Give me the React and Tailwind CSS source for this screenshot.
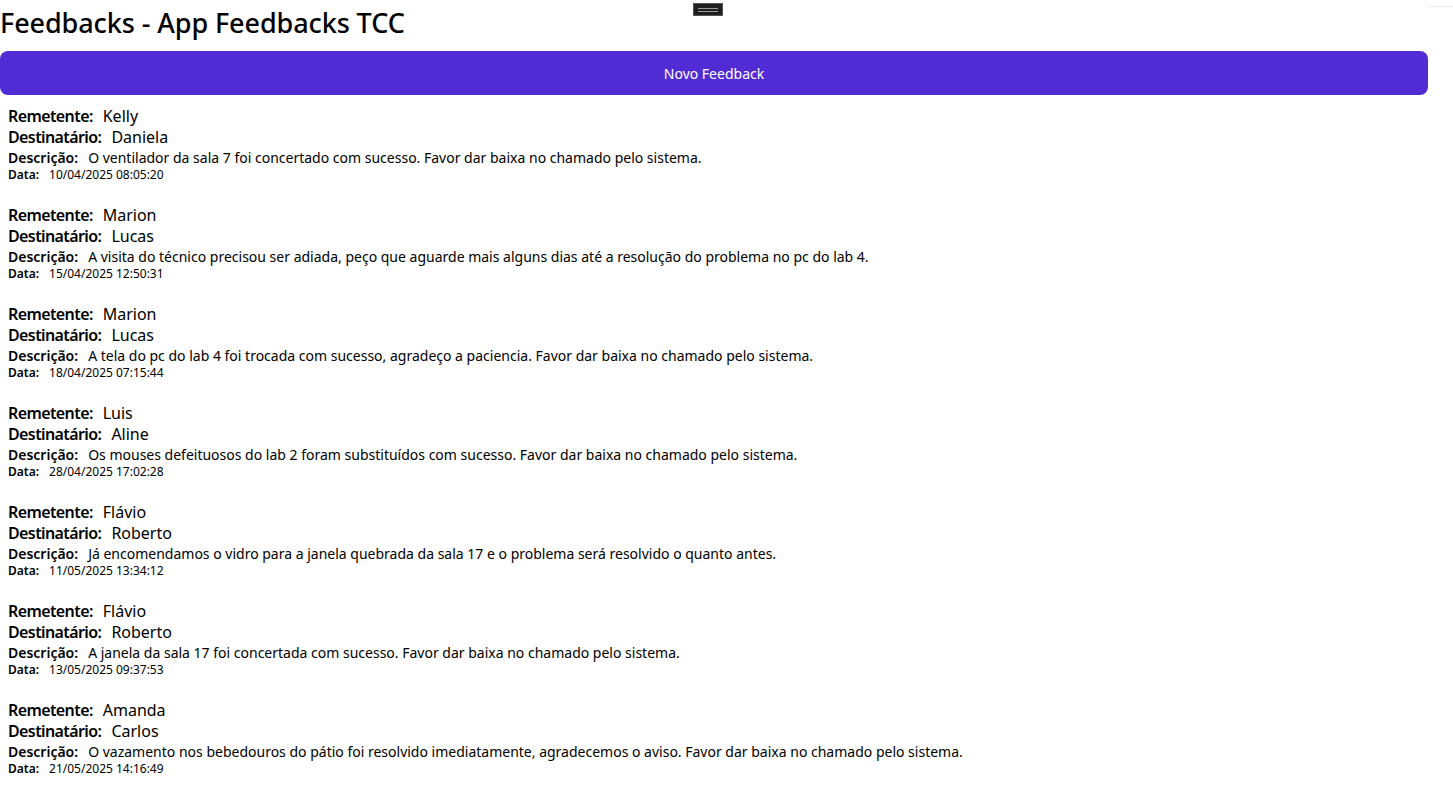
import React from 'react';

const feedbacks = [
    { from: 'Kelly', to: 'Daniela', text: 'O ventilador da sala 7 foi concertado com sucesso. Favor dar baixa no chamado pelo sistema.', date: '10/04/2025 08:05:20' },
    { from: 'Marion', to: 'Lucas', text: 'A visita do técnico precisou ser adiada, peço que aguarde mais alguns dias até a resolução do problema no pc do lab 4.', date: '15/04/2025 12:50:31' },
    { from: 'Marion', to: 'Lucas', text: 'A tela do pc do lab 4 foi trocada com sucesso, agradeço a paciencia. Favor dar baixa no chamado pelo sistema.', date: '18/04/2025 07:15:44' },
    { from: 'Luis', to: 'Aline', text: 'Os mouses defeituosos do lab 2 foram substituídos com sucesso. Favor dar baixa no chamado pelo sistema.', date: '28/04/2025 17:02:28' },
    { from: 'Flávio', to: 'Roberto', text: 'Já encomendamos o vidro para a janela quebrada da sala 17 e o problema será resolvido o quanto antes.', date: '11/05/2025 13:34:12' },
    { from: 'Flávio', to: 'Roberto', text: 'A janela da sala 17 foi concertada com sucesso. Favor dar baixa no chamado pelo sistema.', date: '13/05/2025 09:37:53' },
    { from: 'Amanda', to: 'Carlos', text: 'O vazamento nos bebedouros do pátio foi resolvido imediatamente, agradecemos o aviso. Favor dar baixa no chamado pelo sistema.', date: '21/05/2025 14:16:49' },
];

const Field = ({ label, value, size, tight }) => (
    <div className={`flex items-center ${size}`}>
        <span className={tight ? 'font-semibold tracking-[-0.6px]' : 'font-semibold'}>{label}</span>
        <span className="ml-[10px]">{value}</span>
    </div>
);

// one feedback card
const FeedbackItem = ({ item }) => (
    <div className="px-2 mb-[21px]">
        <Field label="Remetente:" value={item.from} size="text-[16px] h-[21px]" tight />
        <Field label="Destinatário:" value={item.to} size="text-[16px] h-[21px]" tight />
        <Field label="Descrição:" value={item.text} size="text-[14px] h-[20px]" />
        <Field label="Data:" value={item.date} size="text-[12px] h-[16px]" />
    </div>
);

export default function App() {
    return (
        <div className="relative h-[794px] overflow-hidden bg-white text-black font-['Noto_Sans',sans-serif]">
            {/* debug toolbar handle */}
            <div className="absolute left-[693px] top-[3px] w-[30px] h-[13px] bg-[#1f1f1f] border border-[#555] flex flex-col items-center justify-center gap-[2px]">
                <div className="w-[20px] h-px bg-[#9a9a9a]" />
                <div className="w-[20px] h-px bg-[#9a9a9a]" />
            </div>
            <div className="absolute right-0 top-[6px] w-[26px] h-px bg-[#eeeeee]" />

            <div className="pr-[25px]">
                <h1 className="text-[27px] font-medium tracking-[-0.1px] leading-[45px] h-[51px] m-0">Feedbacks - App Feedbacks TCC</h1>
                <button className="w-full h-[44px] rounded-[8px] bg-[#512bd4] text-white text-[14px]">
                    Novo Feedback
                </button>
                <div className="pt-[10px]">
                    {feedbacks.map((f, i) => (
                        <FeedbackItem key={i} item={f} />
                    ))}
                </div>
            </div>
        </div>
    );
}
